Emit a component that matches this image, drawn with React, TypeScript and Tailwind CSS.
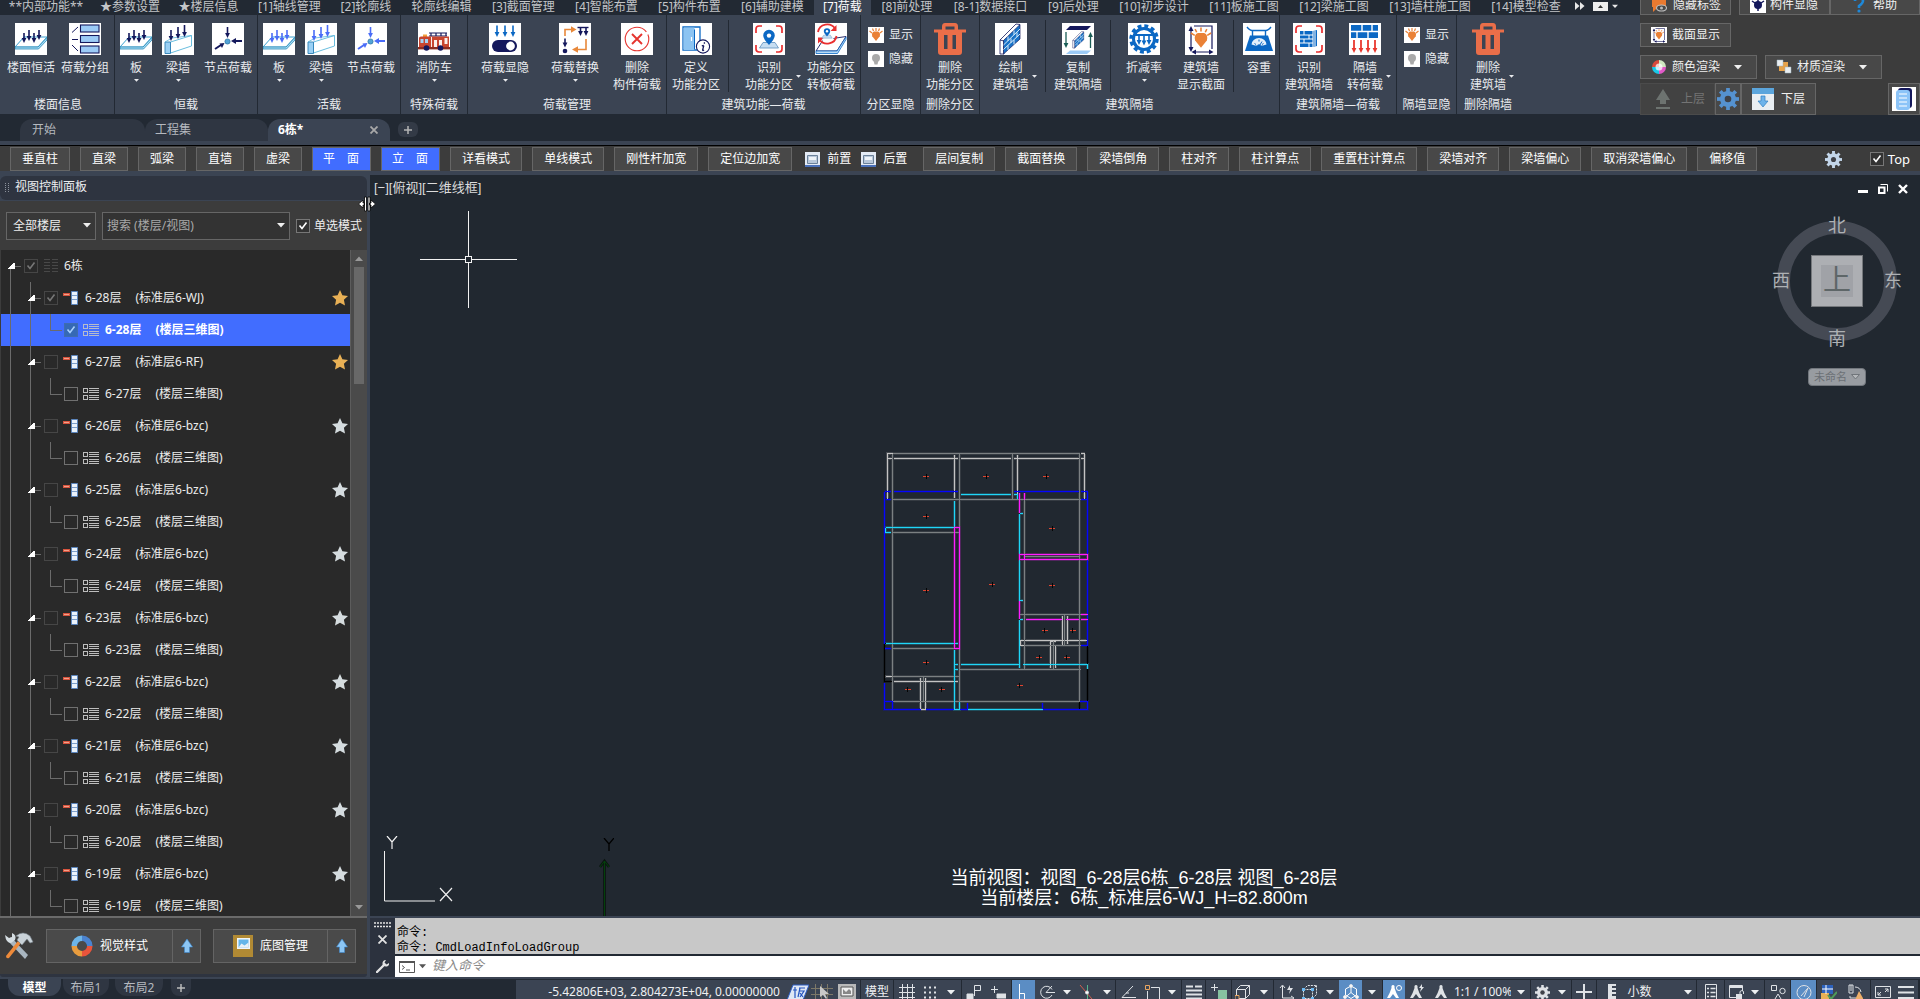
import React, { useState } from "react";

type P = { children?: React.ReactNode };

/* ---------- small shared pieces ---------- */

function Caret({ className = "" }: { className?: string }) {
  return (
    <svg viewBox="0 0 8 5" className={`h-[5px] w-2 shrink-0 ${className}`} fill="currentColor" aria-hidden="true">
      <path d="M0 0h8L4 4.6z" />
    </svg>
  );
}

function Tick({ checked, onChange, label, id, boxClass, tickClass }: {
  checked: boolean; onChange: () => void; label: string; id: string; boxClass: string; tickClass: string;
}) {
  return (
    <span className="grid size-[14px] shrink-0 place-items-center">
      <input
        id={id}
        type="checkbox"
        aria-label={label}
        checked={checked}
        onChange={onChange}
        className={`col-start-1 row-start-1 size-[14px] appearance-none border ${boxClass}`}
      />
      {checked && (
        <svg viewBox="0 0 14 14" className={`pointer-events-none col-start-1 row-start-1 size-[14px] ${tickClass}`} fill="none" stroke="currentColor" strokeWidth="1.6">
          <path d="M3.5 6.5 6 9.5 10.5 3.5" />
        </svg>
      )}
    </span>
  );
}

/* ---------- ribbon drawings ---------- */

function Tile({ children, small }: P & { small?: boolean }) {
  return (
    <svg viewBox="0 0 32 32" className={small ? "size-4 shrink-0" : "size-8 shrink-0"} aria-hidden="true">
      <rect width="32" height="32" fill="#fff" />
      {children}
    </svg>
  );
}

function Arrow({ x, y1, y2, c, w = 1.6 }: { x: number; y1: number; y2: number; c: string; w?: number }) {
  const up = y2 < y1;
  const d = up ? `M${x - 2.4} ${y2 + 5}h4.8L${x} ${y2}z` : `M${x - 2.4} ${y2 - 5}h4.8L${x} ${y2}z`;
  return (
    <g>
      <path d={`M${x} ${y1}V${up ? y2 + 4 : y2 - 4}`} stroke={c} strokeWidth={w} />
      <path d={d} fill={c} />
    </g>
  );
}

const navy = "#14185c";
const azure = "#4a6cf7";
const blue = "#0b68c4";
const sky = "#9ccbf7";

function SlabIcon({ c }: { c: string }) {
  return (
    <Tile>
      <path d="M0 24 9 14H32L23 24z" fill="#fff" stroke="#3aa0cf" strokeWidth="1" />
      <path d="M0 24H23L32 14.5V17L23.5 26H0z" fill="#a5dcf5" stroke="#2b8ab8" strokeWidth=".8" />
      <Arrow x={9} y1={10} y2={20} c={c} />
      <Arrow x={14} y1={7} y2={18} c={c} />
      <Arrow x={19} y1={10} y2={20} c={c} />
      <Arrow x={24} y1={7} y2={17} c={c} />
    </Tile>
  );
}

function WallIcon({ c }: { c: string }) {
  return (
    <Tile>
      <path d="M8.5 19 29.5 12.5V23L8.5 30z" fill="#fff" stroke="#58b5da" strokeWidth=".9" />
      <path d="M3 19H8.5V30.5H3z" fill="#9ad0f5" stroke="#2c7fb5" strokeWidth=".9" />
      <path d="M3 19 10 15 29.5 12.5" stroke="#58b5da" fill="none" strokeWidth=".8" />
      <Arrow x={9} y1={7} y2={18} c={c} />
      <Arrow x={16} y1={4} y2={16} c={c} />
      <Arrow x={22.5} y1={2} y2={14} c={c} />
    </Tile>
  );
}

function NodeIcon({ c }: { c: string }) {
  return (
    <Tile>
      <Arrow x={15.5} y1={4} y2={15} c={c} />
      <path d="M30 18H22" stroke={c} strokeWidth="2" />
      <path d="M19 18l5-3v6z" fill={c} />
      <path d="M3 26 9 22" stroke={c} strokeWidth="2" />
      <path d="M12.5 20 7.5 20.5 10 25z" fill={c} />
      <circle cx="15.5" cy="18.5" r="2.6" fill="#52a3d6" stroke="#2c6f9c" strokeWidth=".7" />
    </Tile>
  );
}

function GroupIcon() {
  return (
    <Tile>
      {[2, 12.5, 23].map((y) => (
        <rect key={y} x="11.5" y={y} width="18.5" height="7" fill={sky} stroke={navy} strokeWidth="1.1" />
      ))}
      <path d="M3 9.5 9 4M3 16.5H9M3 22 9 28" stroke={navy} strokeWidth="1" fill="none" />
    </Tile>
  );
}

function FireTruckIcon() {
  return (
    <Tile>
      <path d="M11 10h18M11 13h18M13 10v3M18 10v3M23 10v3M28 10v3" stroke={navy} strokeWidth="1.2" />
      <path d="M5 11.5h4V14H5z" fill="#f2a33a" />
      <path d="M1 15q0-1.5 2-1.5H31V26H1z" fill="#c8452f" />
      <path d="M2.5 16h3v4h-3zM7 16h3v4H7z" fill="#a7d3f4" />
      <path d="M13.5 14v12" stroke="#fff" strokeWidth=".9" />
      <path d="M16 17h3v7h-3zM21 17h3v7h-3zM26.5 15h3v6h-3z" fill="#fbeee9" />
      <path d="M0 24h32v2.4H0z" fill="#8d2c20" />
      <circle cx="8.5" cy="25" r="2.8" fill={navy} />
      <circle cx="22.5" cy="25" r="2.8" fill={navy} />
    </Tile>
  );
}

function ToggleIcon() {
  return (
    <Tile>
      <Arrow x={8} y1={2.5} y2={14} c={blue} />
      <Arrow x={16} y1={2.5} y2={14} c={blue} />
      <Arrow x={24} y1={2.5} y2={14} c={blue} />
      <rect x="3" y="17" width="25" height="12" rx="6" fill={navy} />
      <circle cx="21.5" cy="23" r="4.4" fill="#fff" />
    </Tile>
  );
}

function SwapIcon() {
  return (
    <Tile>
      <path d="M6 13V6.5H13" stroke="#e8883a" strokeWidth="1.6" fill="none" />
      <path d="M12 3.2 17.5 6.5 12 9.8z" fill="#e8883a" />
      <path d="M27 16V26.5H19" stroke="#e8883a" strokeWidth="1.6" fill="none" />
      <path d="M19 23.2 13 26.5 19 29.8z" fill="#e8883a" />
      <path d="M18.5 4.5H29.5" stroke={navy} strokeWidth="1.4" />
      <Arrow x={21.5} y1={4.5} y2={13} c={navy} />
      <Arrow x={27} y1={4.5} y2={13} c={navy} />
      <Arrow x={6} y1={15.5} y2={24.5} c={navy} />
      <circle cx="6" cy="28" r="2.3" fill={navy} />
    </Tile>
  );
}

function CrossIcon() {
  return (
    <Tile>
      <circle cx="16" cy="16" r="11.8" fill="none" stroke="#e5342f" strokeWidth="1.1" strokeDasharray="66 3" />
      <path d="M11 11 21 21M21 11 11 21" stroke="#e5342f" strokeWidth="1.9" />
    </Tile>
  );
}

function DoorIcon() {
  return (
    <Tile>
      <path d="M3 4H20V27H3z" fill="#fff" stroke={blue} strokeWidth="1.3" />
      <path d="M3.6 4.5H14.5V27H3.6z" fill="#8cc4f2" />
      <path d="M14.5 6.5v20" stroke={blue} strokeWidth="1" />
      <path d="M11.5 14v4" stroke="#fff" strokeWidth="1.2" />
      <circle cx="23" cy="23.5" r="6.6" fill="#fff" stroke={navy} strokeWidth="1.1" />
      <path d="M23.8 22.5 22.6 27q0 1 1.4 0M21.8 22.8l2-.5M24.4 19.3v1.4" stroke={navy} strokeWidth="1.3" fill="none" />
    </Tile>
  );
}

function Brackets() {
  return (
    <path d="M9 3H6Q3 3 3 6V10M23 3h3q3 0 3 3v4M9 29H6Q3 29 3 26V22M23 29h3q3 0 3-3V22" stroke="#ea2f2f" strokeWidth="1.7" fill="none" />
  );
}

function Pin({ k = 1, x = 16, y = 22 }: { k?: number; x?: number; y?: number }) {
  return (
    <g transform={`translate(${x} ${y}) scale(${k})`}>
      <path d="M-6-2.5-9.5 3H9.5L6-2.5z" fill="#c7def2" stroke="#5d8fbd" strokeWidth=".8" />
      <path d="M0 0Q-5.8-6-5.8-9.4A5.8 5.8 0 0 1 5.8-9.4Q5.8-6 0 0z" fill={blue} />
      <circle cx="0" cy="-9.4" r="2.2" fill="#fff" />
    </g>
  );
}

function IdentifyIcon() {
  return <Tile><Brackets /><Pin /></Tile>;
}

function ZoneToSlabIcon() {
  return (
    <Tile>
      <path d="M8 17 31 13.5 22 28H1z" fill="#fff" stroke={navy} strokeWidth=".9" />
      <path d="M1 28H22L31 14V16.5L22.5 30.5H1z" fill="#bcdcf5" stroke={blue} strokeWidth=".8" />
      <circle cx="12" cy="11" r="8" fill="#fff" />
      <path d="M3 9A9.3 9 0 0 1 20 5.5M21.5 13A9.3 9 0 0 1 4.5 16.5" stroke="#ea2f2f" strokeWidth="1.8" fill="none" />
      <path d="M21.5 2V8h-6zM3 20.5V14.5H9z" fill="#ea2f2f" />
      <Pin k={0.55} x={12} y={13.5} />
    </Tile>
  );
}

function BulbShape({ c }: { c: string }) {
  return <path d="M16 28 8.5 18.5Q6.500 11 12 9h8q5.500 2 3.500 9.500z" fill={c} />;
}

function ShowIcon() {
  return (
    <Tile small>
      <BulbShape c="#ea8136" />
      <path d="M16 2v6M9 3l2 5M23 3l-2 5M3 8l5 4M29 8l-5 4" stroke="#ea8136" strokeWidth="2.4" />
    </Tile>
  );
}

function HideIcon() {
  return (
    <Tile small>
      <circle cx="16" cy="14" r="8" fill="#a9a9a9" />
      <path d="M11 18h10l-2 9h-6z" fill="#a9a9a9" />
    </Tile>
  );
}

function TrashIcon() {
  return (
    <svg viewBox="0 0 32 32" className="size-8 shrink-0" aria-hidden="true">
      <path d="M0 6.500H8V3.500Q8 0 11 0H21Q24 0 24 3.500V6.500H32V9.500H28V29Q28 32 25 32H7Q4 32 4 29V9.500H0zM11.500 3.500V6.500H20.500V3.500z" fill="#ea6e49" />
      <path d="M10 12h3.500V26H10zM18.500 12H22V26H18.500z" fill="#3b4453" />
    </svg>
  );
}

function BrickWall({ k = 1, x = 0, y = 0 }: { k?: number; x?: number; y?: number }) {
  return (
    <g transform={`translate(${x} ${y}) scale(${k})`}>
      <path d="M5 17 9 18V31L5 31z" fill="#fff" stroke={navy} strokeWidth=".8" />
      <path d="M8.500 17.500 25 1.500V16L8.500 31z" fill="#1a73c7" stroke={navy} strokeWidth=".7" />
      <path d="M5 17 21 1 25 1.500" stroke={navy} strokeWidth=".8" fill="none" />
      <path d="M8.500 22 25 6M8.500 26.500 25 11M13 13.500v4.400M19 7.500v4.400M16 15.500v4.400M22 9.500v4.400M13 22.500v4.400M19 17v4.400" stroke="#d9ecfb" strokeWidth="1" />
    </g>
  );
}

function DrawWallIcon() {
  return <Tile><BrickWall /></Tile>;
}

function CopyWallIcon() {
  return (
    <Tile>
      <path d="M8 3H29L25 7H4z" fill={navy} />
      <path d="M8 27.500H29L25 31H4z" fill={sky} />
      <Arrow x={4} y1={9} y2={25} c="#1b5e57" w={1.3} />
      <Arrow x={28.500} y1={25} y2={9} c="#1b5e57" w={1.3} />
      <BrickWall k={0.55} x={8} y={8} />
    </Tile>
  );
}

function ReductionIcon() {
  return (
    <Tile>
      <circle cx="16" cy="16" r="13" fill="none" stroke={blue} strokeWidth="3.400" strokeDasharray="3.900 2.900" />
      <circle cx="16" cy="16" r="10.500" fill="#fff" stroke={blue} strokeWidth="3" />
      <path d="M6.500 11H25.500L25 13H7z" fill={blue} />
      <Arrow x={11} y1={11} y2={22} c={blue} />
      <Arrow x={16} y1={11} y2={22.500} c={blue} />
      <Arrow x={21} y1={11} y2={22} c={blue} />
    </Tile>
  );
}

function SectionIcon({ small }: { small?: boolean }) {
  return (
    <Tile small={small}>
      <path d="M9 3H27V26M6 5V26M9 29H26" stroke={navy} strokeWidth="1.200" fill="none" />
      <path d="M3.500 8 6 3l2.500 5zM3.500 24 6 29l2.500-5zM11 26.500 6.500 29 11 31.500zM24 26.500l4.500 2.500L24 31.500z" fill={navy} />
      <g transform="translate(3.500 3) scale(.78)">
        <BulbShape c="#ea8136" />
        <path d="M16 2v5M8.500 4l2 4M23.500 4l-2 4M3 9l5 3M29 9l-5 3" stroke="#ea8136" strokeWidth="2" />
      </g>
    </Tile>
  );
}

function ScaleIcon() {
  return (
    <Tile>
      <path d="M4 4q3 3.500 5 3.500H23q2 0 5-3.500M9.500 7.500V13M22.500 7.500V13" stroke={blue} strokeWidth="1.400" fill="none" />
      <path d="M7 12.500H25L30 28H2z" fill={blue} />
      <path d="M8.500 21.500A7.500 6.500 0 0 1 23.500 21.500L20 22.500H12z" fill="#e4f0fb" />
      <path d="M11.500 20.500l1.500 1M16 16.500v2M20.500 20.500l-1.500 1M16 23.500l3-5" stroke={blue} strokeWidth="1" />
      <circle cx="16" cy="23" r="1.800" fill={blue} />
    </Tile>
  );
}

function IdentifyWallIcon() {
  return (
    <Tile>
      <Brackets />
      <path d="M7 8H20L24 7V23L20 24H7z" fill={blue} />
      <path d="M7 12H20M7 16H20M7 20H20M11 8v4M16 12v4M11 16v4M16 20v4M20 8V24M22 7.500v16" stroke="#fff" strokeWidth="1" />
    </Tile>
  );
}

function WallLoadIcon() {
  return (
    <Tile>
      <path d="M2 2H29V15H2z" fill={blue} />
      <path d="M2 8.500H29M13 2V8.500M23 2V8.500M8 8.500V15M19 8.500V15" stroke="#fff" strokeWidth="1.400" />
      {[5, 12, 19, 26].map((x) => <Arrow key={x} x={x} y1={17} y2={30} c="#e9382f" w={1.800} />)}
    </Tile>
  );
}

/* ---------- menu tabs ---------- */

const menuTabs: [string, string][] = [
  ["**内部功能**", "w-[90px]"], ["★参数设置", "w-[78px]"], ["★楼层信息", "w-[79px]"], ["[1]轴线管理", "w-[83px]"],
  ["[2]轮廓线", "w-[70px]"], ["轮廓线编辑", "w-[81px]"], ["[3]截面管理", "w-[83px]"], ["[4]智能布置", "w-[83px]"],
  ["[5]构件布置", "w-[83px]"], ["[6]辅助建模", "w-[83px]"], ["[7]荷载", "w-[57px]"], ["[8]前处理", "w-[72px]"],
  ["[8-1]数据接口", "w-[95px]"], ["[9]后处理", "w-[71px]"], ["[10]初步设计", "w-[90px]"], ["[11]板施工图", "w-[90px]"],
  ["[12]梁施工图", "w-[90px]"], ["[13]墙柱施工图", "w-[102px]"], ["[14]模型检查", "w-[90px]"],
];

function MenuTabs() {
  return (
    <nav className="flex h-[15px] bg-[#222933] pl-[1px] leading-[13px] text-[#c3c5c8]">
      {menuTabs.map(([t, w]) => (
        <button
          key={t}
          className={`flex h-[15px] shrink-0 items-start justify-center whitespace-nowrap ${w} ${t === "[7]荷载" ? "bg-[#3b4453] text-white" : ""}`}
        >
          {t}
        </button>
      ))}
      <button aria-label="更多" className="flex h-3 items-center px-1 text-[#e8e8e8]">
        <svg viewBox="0 0 10 8" className="h-2 w-2.5" fill="currentColor"><path d="M0 0 4.500 4 0 8zM5 0 9.500 4 5 8z" /></svg>
      </button>
      <button aria-label="最小化功能区" className="flex h-3 items-center gap-1 pl-1 text-[#e8e8e8]">
        <svg viewBox="0 0 15 9" className="h-[9px] w-[15px]"><path fill="#eee" d="M0 0h15v9H0z" /><path fill="#333" d="M5 6h5L7.500 3z" /></svg>
        <Caret className="w-[6px]" />
      </button>
    </nav>
  );
}

/* ---------- ribbon ---------- */

function Big({ icon, a, b, caret, w }: { icon: React.ReactNode; a: string; b?: string; caret?: boolean; w: string }) {
  return (
    <button className={`flex shrink-0 flex-col items-center pt-2 ${w}`}>
      {icon}
      <span className="mt-1 leading-[17px] whitespace-nowrap">{a}</span>
      {b && (
        <span className="relative leading-[17px] whitespace-nowrap">
          {b}
          {caret && <Caret className="absolute -top-0.5 left-full ml-[3px] h-[3px] w-[5px]" />}
        </span>
      )}
      {caret && !b && <Caret className="mt-0.5 h-[3px] w-[5px]" />}
    </button>
  );
}

function Group({ title, w, children }: P & { title: string; w: string }) {
  return (
    <section className={`flex shrink-0 flex-col border-r border-[#222933] ${w}`}>
      <div className="flex flex-1 items-stretch">{children}</div>
      <h2 className="h-[18px] text-center leading-[18px] whitespace-nowrap">{title}</h2>
    </section>
  );
}

function Divider({ className = "mx-1" }: { className?: string }) {
  return <span className={`mt-[5px] mb-1 w-px shrink-0 bg-[#222933] ${className}`} />;
}

function ShowHide() {
  return (
    <div className="flex flex-col gap-2 pt-3 pl-[7px]">
      <button className="flex h-4 items-center gap-[5px] whitespace-nowrap"><ShowIcon />显示</button>
      <button className="flex h-4 items-center gap-[5px] whitespace-nowrap"><HideIcon />隐藏</button>
    </div>
  );
}

function Ribbon() {
  return (
    <div className="flex h-[99px] bg-[#3b4453] pl-0.5 text-[#e9ebee]">
      <Group title="楼面信息" w="w-[113px]">
        <Big w="w-[58px]" icon={<SlabIcon c={navy} />} a="楼面恒活" />
        <Big w="w-[50px]" icon={<GroupIcon />} a="荷载分组" />
      </Group>
      <Group title="恒载" w="w-[143px]">
        <Big w="w-[42px]" icon={<SlabIcon c={navy} />} a="板" caret />
        <Big w="w-[42px]" icon={<WallIcon c={navy} />} a="梁墙" caret />
        <Big w="w-[58px]" icon={<NodeIcon c={navy} />} a="节点荷载" />
      </Group>
      <Group title="活载" w="w-[143px]">
        <Big w="w-[42px]" icon={<SlabIcon c={azure} />} a="板" caret />
        <Big w="w-[42px]" icon={<WallIcon c={azure} />} a="梁墙" caret />
        <Big w="w-[58px]" icon={<NodeIcon c={azure} />} a="节点荷载" />
      </Group>
      <Group title="特殊荷载" w="w-[67px]">
        <Big w="w-[66px]" icon={<FireTruckIcon />} a="消防车" caret />
      </Group>
      <Group title="荷载管理" w="w-[199px]">
        <Big w="w-[74px]" icon={<ToggleIcon />} a="荷载显隐" caret />
        <Big w="w-[66px]" icon={<SwapIcon />} a="荷载替换" caret />
        <Big w="w-[58px]" icon={<CrossIcon />} a="删除" b="构件荷载" />
      </Group>
      <Group title="建筑功能—荷载" w="w-[194px]">
        <Big w="w-[58px]" icon={<DoorIcon />} a="定义" b="功能分区" />
        <Divider className="mr-1.5 ml-[3px]" />
        <Big w="w-[68px]" icon={<IdentifyIcon />} a="识别" b="功能分区" caret />
        <Big w="w-[56px]" icon={<ZoneToSlabIcon />} a="功能分区" b="转板荷载" />
      </Group>
      <Group title="分区显隐" w="w-[60px]"><ShowHide /></Group>
      <Group title="删除分区" w="w-[59px]">
        <Big w="w-[58px]" icon={<TrashIcon />} a="删除" b="功能分区" />
      </Group>
      <Group title="建筑隔墙" w="w-[300px]">
        <Big w="w-[61px]" icon={<DrawWallIcon />} a="绘制" b="建筑墙" caret />
        <Divider />
        <Big w="w-[56px]" icon={<CopyWallIcon />} a="复制" b="建筑隔墙" />
        <Divider />
        <Big w="w-[58px]" icon={<ReductionIcon />} a="折减率" caret />
        <Big w="w-[56px]" icon={<SectionIcon />} a="建筑墙" b="显示截面" />
        <Divider />
        <Big w="w-[42px]" icon={<ScaleIcon />} a="容重" />
      </Group>
      <Group title="建筑隔墙—荷载" w="w-[117px]">
        <Big w="w-[58px]" icon={<IdentifyWallIcon />} a="识别" b="建筑隔墙" />
        <Big w="w-[54px]" icon={<WallLoadIcon />} a="隔墙" b="转荷载" caret />
      </Group>
      <Group title="隔墙显隐" w="w-[60px]"><ShowHide /></Group>
      <section className="flex w-[62px] shrink-0 flex-col">
        <div className="flex flex-1 items-stretch">
          <Big w="w-[62px]" icon={<TrashIcon />} a="删除" b="建筑墙" caret />
        </div>
        <h2 className="h-[18px] text-center leading-[18px] whitespace-nowrap">删除隔墙</h2>
      </section>
    </div>
  );
}

/* ---------- display tools at the right of the ribbon ---------- */

const tool = "flex items-center border border-[#666] bg-[#484848] whitespace-nowrap text-[#f0f0f0]";

function DisplayTools() {
  return (
    <aside className="flex h-[115px] w-[280px] shrink-0 flex-col gap-2 overflow-hidden bg-[#3c3c3c]">
      <div className="flex h-[15px] items-end overflow-hidden">
        <button className={`${tool} h-[21px] w-[91px] shrink-0 gap-1.5 pl-2.5`}>
          <svg viewBox="0 0 16 16" className="size-4"><path d="M1 0h14v10h-8l-5 5v-5H1z" fill="#ea7a30" /><ellipse cx="10.500" cy="11" rx="5" ry="3" fill="#484848" stroke="#bbb" strokeWidth="1.200" /><circle cx="10.500" cy="11" r="1.500" fill="#bbb" /></svg>
          隐藏标签
        </button>
        <button className={`${tool} ml-2 h-[21px] w-[91px] shrink-0 gap-1 pl-2.5`}>
          <svg viewBox="0 0 16 16" className="size-4"><path d="M0 0h16v16H0z" fill="#fff" /><circle cx="8" cy="8" r="4" fill={navy} /><path d="M8 0v14M2 4l3 2M14 4l-3 2" stroke={navy} strokeWidth="1.500" /></svg>
          构件显隐
        </button>
        <button className={`${tool} h-[21px] flex-1 gap-1.5 pl-5`}>
          <svg viewBox="0 0 16 16" className="size-4" fill="none"><path d="M4 4Q4 1 8 1q4 0 4 3 0 2-4 5v2" stroke="#1e88d8" strokeWidth="2.600" /><circle cx="8" cy="14" r="1.600" fill="#1e88d8" /></svg>
          帮助
        </button>
      </div>
      <button className={`${tool} h-6 w-[91px] gap-[5px] pl-2.5`}><SectionIcon small />截面显示</button>
      <div className="flex gap-2">
        <button className={`${tool} h-6 w-[117px] pl-2.5`}>
          <svg viewBox="0 0 16 16" className="mr-[5px] size-4">
            <path d="M8 8 8 1A7 7 0 0 1 15 8z" fill="#cfe8c0" /><path d="M8 8H15A7 7 0 0 1 8 15z" fill="#e15ac8" /><path d="M8 8V15A7 7 0 0 1 1 8z" fill="#19c8e8" /><path d="M8 8H1A7 7 0 0 1 8 1z" fill="#d8493c" />
            <circle cx="8" cy="8" r="3.500" fill="#fff" opacity=".75" />
          </svg>
          颜色渲染<Caret className="ml-[14px]" />
        </button>
        <button className={`${tool} h-6 w-[117px] pl-2.5`}>
          <svg viewBox="0 0 16 16" className="mr-[5px] size-4"><path d="M3 3h9v9H3z" fill="#e6a24a" /><path d="M1 1h6v6H1zM9 8h6v6H9z" fill="#e9eef2" stroke="#9fb0bd" strokeWidth=".5" /></svg>
          材质渲染<Caret className="ml-[14px]" />
        </button>
      </div>
      <div className="-mt-1 flex h-8">
        <button disabled className="flex w-[75px] items-center gap-2 border border-[#4b4b4b] bg-[#424242] pl-3 whitespace-nowrap text-[#747474]">
          <svg viewBox="0 0 20 22" className="h-[22px] w-5" fill="#6d7370"><path d="M10 1 17 12H13v4H7V12H3zM3 19h14v2H3z" /></svg>
          上层
        </button>
        <button aria-label="楼层设置" className={`${tool} w-[26px] justify-center`}>
          <GearShape className="size-[22px] text-[#5592d0]" />
        </button>
        <button className={`${tool} w-[75px] gap-[7px] pl-2.5`}>
          <svg viewBox="0 0 22 22" className="size-[22px]"><path d="M0 0h22v22H0z" fill="#e9eef2" /><path d="M0 0h22v6H0z" fill="#5ba5dc" /><path d="M9 8h4v5h3l-5 6-5-6h3z" fill="#6db3ea" stroke="#2e7fc0" strokeWidth=".7" /></svg>
          下层
        </button>
        <button aria-label="图纸列表" className={`${tool} ml-auto w-8 justify-center`}>
          <svg viewBox="0 0 24 24" className="size-6"><path d="M0 0h24v24H0z" fill="#fff" /><rect x="6" y="1" width="14" height="20" rx="3" fill={navy} /><rect x="4" y="3" width="14" height="20" rx="3" fill="#8cc4f8" /><path d="M7 7h8M7 11h8M7 15h8M7 19h8" stroke="#fff" strokeWidth="1.200" /></svg>
        </button>
      </div>
    </aside>
  );
}

function GearShape({ className = "" }: { className?: string }) {
  return (
    <svg viewBox="0 0 20 20" className={`shrink-0 ${className}`} aria-hidden="true">
      <g fill="currentColor">
        {[0, 45, 90, 135].map((a) => <path key={a} d="M8.300 0h3.400v20H8.300z" transform={`rotate(${a} 10 10)`} />)}
        <circle cx="10" cy="10" r="7.300" />
      </g>
      <circle cx="10" cy="10" r="3" fill="#3f4249" />
    </svg>
  );
}

/* ---------- file tabs ---------- */

function FileTabs() {
  return (
    <div className="flex h-[26px] shrink-0 items-end bg-[#222933] pl-5 text-[#b5b9bf]">
      <button className="h-[22px] w-[125px] rounded-t-xl bg-[#2f3642] pl-3 text-left">开始</button>
      <button className="h-[22px] w-[123px] rounded-t-xl bg-[#2f3642] pl-[10px] text-left">工程集</button>
      <div className="flex h-[22px] w-[122px] items-center justify-between rounded-t-xl bg-[#3b4453] pr-3 pl-[10px] text-white">
        <button className="font-bold">6栋*</button>
        <button aria-label="关闭" className="text-[#a9a9a9]">
          <svg viewBox="0 0 8 8" className="size-2" stroke="currentColor" strokeWidth="1.800"><path d="M.5.5l7 7M7.500.5l-7 7" /></svg>
        </button>
      </div>
      <button aria-label="新建" className="mb-1 ml-2 flex h-[15px] w-5 items-center justify-center rounded-md bg-[#333a46] text-[#b5b5b5]">
        <svg viewBox="0 0 8 8" className="size-2" stroke="currentColor" strokeWidth="1.500"><path d="M4 0v8M0 4h8" /></svg>
      </button>
    </div>
  );
}

/* ---------- modelling toolbar ---------- */

const left = ["垂直柱", "直梁", "弧梁", "直墙", "虚梁", "平　面", "立　面", "详看模式", "单线模式", "刚性杆加宽", "定位边加宽"];
const right = ["层间复制", "截面替换", "梁墙倒角", "柱对齐", "柱计算点", "重置柱计算点", "梁墙对齐", "梁墙偏心", "取消梁墙偏心", "偏移值"];

function BarButton({ t }: { t: string }) {
  const on = t.includes("　");
  return (
    <button className={`h-6 shrink-0 border border-[#666] whitespace-nowrap text-white ${on ? "bg-[#416dff] pr-[11px] pl-2.5" : "bg-[#484848] px-[11px]"}`}>{t}</button>
  );
}

function OrderIcon() {
  return (
    <svg viewBox="0 0 15 15" className="size-[15px]" aria-hidden="true">
      <path d="M0 0h15v15H0z" fill="#e4ebf5" /><path d="M0 13h15v2H0z" fill="#4a70b8" />
      <path d="M2.500 3.500h10v8h-10z" fill="#b9c8da" stroke="#6b8199" /><path d="M4 5h7v3H4z" fill="#eef3f8" />
    </svg>
  );
}

function Toolbar() {
  const [top, setTop] = useState(true);
  return (
    <div className="shrink-0 border-t-4 border-b-4 border-[#3b4453]">
      <div className="flex h-[26px] items-end gap-2.5 border-t border-black bg-[#3c3c3c] pl-2.5">
        {left.map((t) => <BarButton key={t} t={t} />)}
        <div className="flex h-6 shrink-0 items-center gap-2.5 px-[3px] text-white">
          <button className="flex items-center gap-[7px] whitespace-nowrap"><OrderIcon />前置</button>
          <button className="mr-[3px] flex items-center gap-[7px] whitespace-nowrap"><OrderIcon />后置</button>
        </div>
        {right.map((t) => <BarButton key={t} t={t} />)}
        <div className="ml-auto flex h-6 items-center gap-7 pr-2.5">
          <button aria-label="设置"><GearShape className="size-[17px] text-[#c3d6ea]" /></button>
          <label htmlFor="top" className="flex items-center gap-1 text-[13px] text-white">
            <Tick id="top" label="Top" checked={top} onChange={() => setTop(!top)} boxClass="border-[#777] bg-[#333]" tickClass="text-white" />
            Top
          </label>
        </div>
      </div>
    </div>
  );
}

/* ---------- view tree ---------- */

function Gutter({ level }: { level: 0 | 1 | 2 }) {
  return (
    <svg viewBox={`0 0 ${[23, 43, 63][level]} 32`} className={`h-8 shrink-0 ${["w-[23px]", "w-[43px]", "w-[63px]"][level]}`} fill="none" stroke="#6b6b6b" shapeRendering="crispEdges" aria-hidden="true">
      {level === 0 && <><path d="M9.500 17v15M13 16.500h7" /><path d="M7 18.500h6.500v-6z" fill="#fff" stroke="none" /></>}
      {level === 1 && <><path d="M9.500 0v32M29.500 0v32M33 16.500h7" /><path d="M27 18.500h6.500v-6z" fill="#fff" stroke="none" /></>}
      {level === 2 && <path d="M9.500 0v32M29.500 0v32M49.500 0v16.500h11" />}
    </svg>
  );
}

const floors = [
  { n: "6-28层", s: "(标准层6-WJ)", gold: true },
  { n: "6-27层", s: "(标准层6-RF)", gold: true },
  ...[26, 25, 24, 23, 22, 21, 20, 19].map((k) => ({ n: `6-${k}层`, s: "(标准层6-bzc)", gold: false })),
];

function FloorIcon() {
  return (
    <svg viewBox="0 0 16 14" className="h-[14px] w-4 shrink-0" aria-hidden="true">
      <path d="M0 2h7v3H0z" fill="#d8543e" /><path d="M1 3h5v1H1z" fill="#f0a08a" />
      <path d="M8.500.500h6v13h-6z" fill="#eaf2fb" stroke="#5b85bd" /><path d="M9 4.500h5M9 8.500h5" stroke="#7e9fc8" />
    </svg>
  );
}

function ViewIcon({ on }: { on: boolean }) {
  return (
    <svg viewBox="0 0 16 12" className="h-3 w-4 shrink-0" fill="none" stroke={on ? "#b5bccb" : "#bdbdbd"} shapeRendering="crispEdges" aria-hidden="true">
      <path d="M.5.5h4v4h-4zM.5 7.500h4v4h-4zM6 .5h10M6 2.500h10M6 4.500h10M6 7.500h10M6 9.500h10M6 11.500h10" />
    </svg>
  );
}

function Tree() {
  const [on, setOn] = useState<string[]>(["root", "f6-28层", "v6-28层"]);
  const flip = (k: string) => setOn((o) => (o.includes(k) ? o.filter((x) => x !== k) : [...o, k]));
  const dim = "border-[#464646] bg-[#292929]";
  return (
    <div className="flex min-h-0 flex-1 pl-px">
      <ul className="min-w-0 flex-1 overflow-hidden bg-[#292929] text-[#ececec]">
        <li className="flex h-8 items-center">
          <Gutter level={0} />
          <Tick id="root" label="6栋" checked={on.includes("root")} onChange={() => flip("root")} boxClass={dim} tickClass="text-[#777]" />
          <svg viewBox="0 0 14 14" className="mx-1.5 size-[14px]" stroke="#484848" shapeRendering="crispEdges"><path d="M0 .5h6M0 3.500h6M0 6.500h6M0 9.500h6M0 12.500h6M8 .5h6M8 3.500h6M8 6.500h6M8 9.500h6M8 12.500h6" /></svg>
          <label htmlFor="root">6栋</label>
        </li>
        {floors.map((f) => {
          const first = f.n === "6-28层";
          return (
            <React.Fragment key={f.n}>
              <li className="flex h-8 items-center">
                <Gutter level={1} />
                <Tick id={`f${f.n}`} label={f.n} checked={on.includes(`f${f.n}`)} onChange={() => flip(`f${f.n}`)} boxClass={dim} tickClass="text-[#777]" />
                <span className="mr-1.5 ml-[5px]"><FloorIcon /></span>
                <label htmlFor={`f${f.n}`} className="flex gap-[14px] whitespace-nowrap"><span>{f.n}</span><span>{f.s}</span></label>
                <button aria-label={`收藏 ${f.n}`} className={`mr-0.5 ml-auto ${f.gold ? "text-[#e8b055]" : "text-[#d5dcdf]"}`}>
                  <svg viewBox="0 0 16 16" className="size-4" fill="currentColor"><path d="M8 0 10.400 5.200 16 5.900 11.900 9.700 13 15.500 8 12.700 3 15.500 4.100 9.700 0 5.900 5.600 5.200z" /></svg>
                </button>
              </li>
              <li className={`flex h-8 items-center ${first ? "bg-[#416dff] font-bold text-white" : ""}`}>
                <Gutter level={2} />
                <Tick id={`v${f.n}`} label={`${f.n} 楼层三维图`} checked={on.includes(`v${f.n}`)} onChange={() => flip(`v${f.n}`)} boxClass={first ? "border-[#3f6cb0] bg-[#3569b5]" : "border-[#707070] bg-[#292929]"} tickClass="text-[#a8d0ff]" />
                <span className="mr-1.5 ml-[5px]"><ViewIcon on={first} /></span>
                <label htmlFor={`v${f.n}`} className="flex gap-[14px] whitespace-nowrap"><span>{f.n}</span><span>(楼层三维图)</span></label>
              </li>
            </React.Fragment>
          );
        })}
      </ul>
      <div className="flex w-[17px] flex-col items-center border-l border-[#5c5c5c] bg-[#4a4a4a] py-1.5 text-[#999]">
        <Caret className="rotate-180" />
        <div className="mt-1.5 h-[117px] w-2.5 bg-[#686868]" />
        <Caret className="mt-auto" />
      </div>
    </div>
  );
}

function UpArrow() {
  return (
    <svg viewBox="0 0 12 14" className="h-[14px] w-3" aria-hidden="true"><path d="M6 0 11.500 8H8.500v5.500h-5V8H.5z" fill="#8cc6f5" stroke="#3e8ad0" strokeWidth=".6" /></svg>
  );
}

function SplitButton({ icon, t, w }: { icon: React.ReactNode; t: string; w: string }) {
  return (
    <div className={`flex h-[34px] border border-[#646464] bg-[#4a4a4a] ${w}`}>
      <button className="flex flex-1 items-center justify-center gap-[7px] whitespace-nowrap text-white">{icon}{t}</button>
      <button aria-label={`${t}菜单`} className="flex w-7 items-center justify-center border-l border-[#646464]"><UpArrow /></button>
    </div>
  );
}

function SidePanel() {
  const [single, setSingle] = useState(true);
  return (
    <section className="flex w-[370px] shrink-0 flex-col bg-[#3b4453] pr-[3px]">
      <h1 className="mt-px mb-px flex h-6 items-center gap-[6px] rounded-md bg-[#2e3440] pb-0.5 pl-[5px] text-[#eceef0]">
        <svg viewBox="0 0 4 9" className="h-[9px] w-1" fill="#8c929c"><path d="M0 0h1v1H0zM3 0h1v1H3zM0 2h1v1H0zM3 2h1v1H3zM0 4h1v1H0zM3 4h1v1H3zM0 6h1v1H0zM3 6h1v1H3zM0 8h1v1H0zM3 8h1v1H3z" /></svg>
        视图控制面板
      </h1>
      <div className="flex min-h-0 flex-1 flex-col bg-[#3c3c3c]">
        <div className="flex h-[49px] items-center gap-1.5 pl-1.5 text-[#eee]">
          <div className="grid w-[90px] items-center">
            <select aria-label="楼层范围" className="col-start-1 row-start-1 h-7 appearance-none border border-[#666] bg-[#383838] pl-1.5">
              <option>全部楼层</option>
            </select>
            <Caret className="pointer-events-none col-start-1 row-start-1 mr-[5px] justify-self-end" />
          </div>
          <div className="grid w-[188px] items-center">
            <input aria-label="搜索" placeholder="搜索 (楼层/视图)" className="col-start-1 row-start-1 h-7 w-full border border-[#666] bg-[#333] pl-1 placeholder:text-[#a8a8a8]" />
            <Caret className="pointer-events-none col-start-1 row-start-1 mr-[5px] justify-self-end" />
          </div>
          <label htmlFor="single" className="flex items-center gap-1 whitespace-nowrap">
            <Tick id="single" label="单选模式" checked={single} onChange={() => setSingle(!single)} boxClass="border-[#777] bg-[#333]" tickClass="text-white" />
            单选模式
          </label>
        </div>
        <Tree />
        <div className="flex h-[58px] shrink-0 items-center gap-3 border-t-2 border-[#6a6a6a] pl-1">
          <button aria-label="工具">
            <svg viewBox="0 0 30 28" className="h-7 w-[30px]">
              <path d="M7 5 24 23l-3 4L4 9z" fill="#a9b6c0" /><path d="M1 3l4 3 3-1V1Q13 3 11 8L7 11Q2 11 1 3z" fill="#d5dde2" />
              <path d="M17 11 5 26q-3 1-3-2L14 9z" fill="#ed8a3a" /><path d="M12 4Q19-2 26 4l3 6-3 1-3-4-5 6-5-5 2-3z" fill="#c9d2d8" stroke="#77838c" strokeWidth=".6" />
            </svg>
          </button>
          <SplitButton w="w-[155px]" t="视觉样式" icon={
            <svg viewBox="0 0 24 24" className="size-[22px]" fill="none" strokeWidth="6">
              <path d="M12 3.500A8.500 8.500 0 0 1 20.500 12" stroke="#4b83cf" /><path d="M20.500 12A8.500 8.500 0 0 1 12 20.500" stroke="#e9543b" /><path d="M12 20.500A8.500 8.500 0 0 1 3.500 12" stroke="#e89c3e" /><path d="M3.500 12A8.500 8.500 0 0 1 12 3.500" stroke="#6db5e8" />
            </svg>} />
          <SplitButton w="w-[143px]" t="底图管理" icon={
            <svg viewBox="0 0 20 22" className="h-[22px] w-5"><path d="M0 0h20v22H0z" fill="#b18a34" /><path d="M4 3h13v11H4z" fill="#f3f6f8" /><path d="M5.500 4.500h10v8h-10z" fill="#64b5e8" /><path d="M5.500 12.500l3-4 3 2 4-3v5z" fill="#e8f0f5" /></svg>} />
        </div>
      </div>
      <div className="mb-[2px] h-[3px] rounded-b-md bg-[#2e3440]" />
    </section>
  );
}

/* ---------- drawing area ---------- */

const marks: [number, number][] = [
  [198, 136], [378, 136], [558, 136], [198, 256], [576, 292], [198, 478], [396, 460], [576, 463], [553, 597], [637, 597],
  [537, 679], [619, 679], [198, 694], [142, 775], [244, 775], [478, 763],
];

const walls: [string, string][] = [
  ["#000000", "M96 637H73V751H96M683 645V811M658 811V832"],
  ["#c4c4c4", "M82 205V67H97M82 82H97M102 82H294M303 82H453M462 82H655M662 82H674V205M662 67H674M284 72V199M473 72V199M673 67V82"],
  ["#c4c4c4", "M96 736H76M102 751H294M182 741V835H197V741M607 555V640M622 555V638M480 628H681M480 628V643H495M572 628V710M587 645V710M572 631H587"],
  ["#7b8082", "M97 67H658M97 67V811H658V67M298 67V811M458 67V205M97 205H683M97 304H298M97 652H298M97 736H298M190 736V811M298 715H662M494 205V715M494 377H658M479 550H662M613 550V640M494 643H662M580 628V715"],
  ["#0505ff", "M102 181H294M462 181H655M73 181H92M662 181H683M73 181V637M683 181V643H662M73 652H92M76 205H92M662 205H683M73 755V835H97V811H73M97 835H182M197 835H322V815M547 815V835H683V811H658M683 811V835"],
  ["#1fd6f8", "M284 210V289M303 190H453M462 190H473V203M76 289H282M76 304H92M76 289V304M479 247V508M479 247H489M479 508H489M76 637H294M479 565H489M479 565V710M303 700H479M489 700H683V713M284 657V835H299V811M284 715H294M284 700H294M322 835H547"],
  ["#ff1cff", "M284 289H299V652H284zM479 184V245M494 184V205M479 370H683V385H479zM494 370V385M479 510V562M498 565H604M618 565H655M662 550H683M662 565H683"],
];

function FloorPlan() {
  return (
    <svg viewBox="0 0 750 900" className="absolute top-64 left-[490px] h-[300px] w-[250px]" fill="none" shapeRendering="crispEdges" aria-label="标准层平面">
      <g transform="translate(.5 .5)">
        <g strokeWidth="9" opacity=".22">
          {walls.map(([c, d]) => <path key={d} stroke={c} d={d} />)}
        </g>
        <g strokeWidth="3">
          {walls.map(([c, d]) => <path key={d} stroke={c} d={d} />)}
          {marks.map(([x, y]) => (
            <g key={`${x}-${y}`}>
              <path stroke="#050505" d={`M${x} ${y - 8}V${y + 8}`} />
              <path stroke="#e0442f" d={`M${x - 9} ${y}H${x - 2}M${x + 2} ${y}H${x + 9}`} />
            </g>
          ))}
        </g>
      </g>
    </svg>
  );
}

function ViewCube() {
  return (
    <div className="absolute top-[44px] right-[18px] grid h-[124px] w-[130px] place-items-center text-[18px] text-[#aeb1b4]">
      <svg viewBox="5 0 130 124" className="col-start-1 row-start-1 h-[124px] w-[130px]"><circle cx="70" cy="62" r="53.500" fill="none" stroke="#454a54" strokeWidth="13" /></svg>
      <button className="z-10 col-start-1 row-start-1 -mt-[3px] self-start leading-5">北</button>
      <button className="z-10 col-start-1 row-start-1 -mb-1.5 self-end leading-5">南</button>
      <button className="z-10 col-start-1 row-start-1 justify-self-start leading-5">西</button>
      <button className="z-10 col-start-1 row-start-1 justify-self-end leading-5">东</button>
      <button className="z-10 col-start-1 row-start-1 flex size-[52px] items-center justify-center border border-[#75787c] bg-[#adafb3]">
        <span className="flex size-8 items-center justify-center bg-[#a0a2a7] text-[28px] leading-8 text-[#5e6668]">上</span>
      </button>
    </div>
  );
}

function Canvas() {
  return (
    <main className="relative min-h-0 flex-1 overflow-hidden bg-[#212830] font-['Liberation_Sans','Noto_Sans_CJK_SC',sans-serif]">
      <div className="flex h-[26px] items-center justify-between pr-3 pl-1 text-[13px] text-[#dcdcdc]">
        <div className="flex whitespace-nowrap"><button>[−]</button><button>[俯视]</button><button>[二维线框]</button></div>
        <div className="flex items-center gap-2.5 pt-0.5 text-white">
          <button aria-label="最小化"><svg viewBox="0 0 10 10" className="size-2.5"><path d="M0 6h10v3H0z" fill="currentColor" /></svg></button>
          <button aria-label="还原"><svg viewBox="0 0 10 10" className="size-2.5" fill="none" stroke="currentColor"><path d="M1 3.500h5.500V9H1z" strokeWidth="2" /><path d="M2.500 .5h7v7" /></svg></button>
          <button aria-label="关闭视口"><svg viewBox="0 0 10 10" className="size-2.5" stroke="currentColor" strokeWidth="2.400"><path d="M1 1l8 8M9 1l-8 8" /></svg></button>
        </div>
      </div>
      <svg viewBox="0 0 97 97" className="absolute top-9 left-[50px] size-[97px]" fill="none" stroke="#f2f2f2" shapeRendering="crispEdges">
        <path d="M48.500 0v45M48.500 52v45M0 48.500h45M52 48.500h45M45.500 45.500h6v6h-6z" />
      </svg>
      <FloorPlan />
      <ViewCube />
      <button className="absolute top-[193px] right-[54px] flex h-[18px] w-[58px] items-center justify-center gap-1 rounded border border-[#72777d] bg-[#989ca1] text-[11px] whitespace-nowrap text-[#6b7075]">
        未命名
        <svg viewBox="0 0 9 6" className="h-1.5 w-[9px]" fill="#b5b8bb" stroke="#70757a"><path d="M.5.500h8L4.500 5z" /></svg>
      </button>
      <svg viewBox="0 0 80 80" className="absolute bottom-0 left-3 size-20" fill="none" stroke="#f0f0f0">
        <path d="M2.500 15v50H53" />
        <path d="M5 0l5 6 5-6M10 6v7M58 52l12 13M70 52 58 65" strokeWidth="1.200" />
      </svg>
      <svg viewBox="0 0 16 78" className="absolute bottom-0 left-[228px] h-[78px] w-4" fill="none" stroke="#000">
        <path d="M6 0l5 6 5-6M11 6v7" strokeWidth="1.300" />
        <path d="M6.500 23v55M2 29l4.500-6 4.500 6" stroke="#0a1410" strokeWidth="2.600" />
        <path d="M6.500 23v55M2 29l4.500-6 4.500 6" stroke="#04400c" />
      </svg>
      <p className="absolute inset-x-0 bottom-2 pr-0.5 text-center text-[18px] leading-5 whitespace-nowrap text-white">
        当前视图：视图_6-28层6栋_6-28层 视图_6-28层<br />当前楼层：6栋_标准层6-WJ_H=82.800m
      </p>
    </main>
  );
}

function CommandLine() {
  return (
    <section className="flex h-[63px] shrink-0 border-t-2 border-b-2 border-[#3b4453] bg-[#2c323e] font-['Liberation_Mono','Noto_Sans_CJK_SC',monospace]">
      <div className="flex w-[25px] flex-col items-center justify-between py-1 text-[#e2e2e2]">
        <svg viewBox="0 0 17 6" className="h-1.5 w-[17px]" stroke="currentColor" strokeDasharray="2 1" strokeWidth="1.500"><path d="M0 1h17M0 4.500h17" /></svg>
        <svg viewBox="0 0 9 9" className="size-[9px]" stroke="currentColor" strokeWidth="1.800"><path d="M.5.500l8 8M8.500.500l-8 8" /></svg>
        <svg viewBox="0 0 14 14" className="mt-2 size-[14px]"><path d="M1 13 8 6" stroke="currentColor" strokeWidth="2.400" strokeLinecap="round" /><path d="M13 4 10.500 5.500 8.500 3.500 10 1Q6 1 6.500 5.500 8.500 8.500 12 7 13.500 6 13 4z" fill="currentColor" /></svg>
      </div>
      <div className="flex min-w-0 flex-1 flex-col bg-white text-black">
        <div className="h-[38px] border-b-2 border-[#222933] bg-[#c8c8c8] pt-2 pl-0.5 text-[12px] leading-[15px]">
          <p>命令:</p>
          <p>命令: CmdLoadInfoLoadGroup</p>
        </div>
        <div className="flex flex-1 items-center gap-1 pl-1 text-[#555]">
          <svg viewBox="0 0 16 12" className="h-3 w-4" fill="none" stroke="#555"><path d="M.5.500h15v11H.5z" /><path d="M0 1h16" strokeWidth="2" /><path d="M3 4.500l2.500 2L3 8.500M7 9h4" /></svg>
          <Caret className="h-1 w-[7px]" />
          <input aria-label="命令" placeholder="键入命令" className="ml-0.5 min-w-0 flex-1 text-[13px] italic outline-none placeholder:text-[#8a8a8a]" />
        </div>
      </div>
    </section>
  );
}

/* ---------- bottom bar ---------- */

type Cell = { w: string; d?: React.ReactNode; t?: string; on?: boolean; caret?: boolean; name?: string; gap?: boolean };

function S({ children }: P) {
  return <svg viewBox="0 0 16 16" className="size-4 shrink-0" fill="none" stroke="#dfe2e6" aria-hidden="true">{children}</svg>;
}

const cube = <path d="M1.500 5.500h9v9h-9zM1.500 5.500l4-4h9l-4 4M14.500 1.500v9l-4 4" />;
const person = (c: string) => <path d="M7 1Q9 1 8.500 4 10 9 13 14H10L7 10 4 14H1Q4 9 5.500 4 5 1 7 1z" fill={c} stroke="none" />;

const cells: Cell[] = [
  { w: "w-[24px]", name: "板", d: <svg viewBox="0 0 22 16" className="h-4 w-[22px] shrink-0"><path d="M6 1h16l-6 15H0z" fill="#dfe7f5" stroke="#2f5fc4" /><path d="M8 3v11M6 6h4M12 4h6M13 4l-2 9M12 7h5l-4 6M13 9l3 4" stroke="#2454c0" strokeWidth="1.200" fill="none" /></svg> },
  { w: "w-[24px]", name: "捕捉光标", d: <svg viewBox="0 0 22 16" className="h-4 w-[22px] shrink-0"><path d="M4.500 0v16M10.500 0v16M16.500 0v16M0 4.500h22M0 10.500h22" stroke="#7d7868" /><path d="M9 2v11l3-2 3 4 1-1-2-4h4z" fill="#c9c9c9" /></svg> },
  { w: "w-[26px]", name: "显示器", d: <svg viewBox="0 0 18 16" className="h-4 w-[18px] shrink-0"><path d="M0 0h18v16H0z" fill="#b9b9b9" /><path d="M3 3h12v9H3z" fill="#eee" stroke="#555" /><path d="M5 5l3 3 3-3 2 2v3H5z" fill="#888" /></svg> },
  { w: "w-[33px]", t: "模型", gap: true },
  { w: "w-[26px]", name: "栅格", gap: true, d: <S><path d="M3.500 0v16M8.500 0v16M13.500 0v16M0 3.500h16M0 8.500h16M0 13.500h16" /></S> },
  { w: "w-[22px]", name: "捕捉模式", d: <S><path d="M2 3.500h13M2 8.500h13M2 13.500h13" strokeDasharray="2 3" strokeWidth="2" /></S> },
  { w: "w-[20px]", caret: true, name: "捕捉选项" },
  { w: "w-[24px]", name: "推断约束", gap: true, d: <S><path d="M8.500 1.500h6v5h-6zM8.500 4v8" /><path d="M1 10h6v5H1z" fill="#dfe2e6" /></S> },
  { w: "w-[26px]", name: "动态输入", d: <S><path d="M4.500 2v7M1 5.500h7" /><path d="M7 10h9v4H7z" fill="#dfe2e6" /></S> },
  { w: "w-[24px]", name: "正交", on: true, gap: true, d: <S><path d="M3.500 0v15.500M3 9.500h5.500v6" stroke="#fff" /></S> },
  { w: "w-[23px]", name: "极轴", d: <S><path d="M13 5.500A6 6 0 1 0 13 11M7 8.500h9M7 8.500 13 2" /></S> },
  { w: "w-[17px]", caret: true, name: "极轴选项" },
  { w: "w-[23px]", name: "等轴测", d: <S><path d="M8.500 1v14" stroke="#57b58c" /><path d="M1 1l12 14" stroke="#d0604c" /><circle cx="8" cy="8.500" r="1.500" fill="#fff" /></S> },
  { w: "w-[17px]", caret: true, name: "等轴测选项" },
  { w: "w-[25px]", name: "对象追踪", gap: true, d: <S><path d="M13 2 2 13.500h14M6 9h3" /></S> },
  { w: "w-[23px]", name: "对象捕捉", d: <S><path d="M7 3.500h8.500V15M3.500 7v9" /><path d="M1.500 1.500h4v4h-4z" stroke="#e8a560" /></S> },
  { w: "w-[18px]", caret: true, name: "捕捉列表" },
  { w: "w-[24px]", name: "线宽", gap: true, d: <S><path d="M0 2.500h7M9 2.500h7M0 6.500h16M0 10.500h16M0 14.500h16" strokeWidth="2" /></S> },
  { w: "w-[26px]", name: "透明度", gap: true, d: <S><path d="M7 6h9v10H7z" fill="#86c2a0" stroke="none" /><path d="M3.500 0v7M0 3.500h7" /></S> },
  { w: "w-[23px]", name: "选择循环", gap: true, d: <S>{cube}<path d="M0 11.500h4v4H0z" fill="#3b4453" stroke="#e8a560" /></S> },
  { w: "w-[19px]", caret: true, name: "循环选项" },
  { w: "w-[26px]", name: "动态UCS", gap: true, d: <S><path d="M3.500 2v12h10M1 4l2.500-3L6 4M12 12l3 2-3 2" /><path d="M11 1 8 6h3l-1 4 4-6h-3z" fill="#dfe2e6" stroke="none" /></S> },
  { w: "w-[22px]", name: "过滤", d: <S><g strokeDasharray="2 1">{cube}</g><path d="M0 4h3v3H0zM9 4h3v3H9zM0 13h3v3H0zM9 13h3v3H9z" fill="#6cb8f0" stroke="none" /></S> },
  { w: "w-[18px]", caret: true, name: "过滤选项" },
  { w: "w-[23px]", name: "小控件", on: true, d: <S><path d="M8 8.500V3M8 8.500 2.500 13M8 8.500l5.500 4.500M8 2 13.500 5v6L8 14.500 2.500 11V5z" stroke="#fff" /><circle cx="8" cy="2" r="1.500" fill="#fff" /><circle cx="2" cy="13" r="1.500" fill="#fff" /><circle cx="14" cy="13" r="1.500" fill="#fff" /></S> },
  { w: "w-[20px]", caret: true, name: "小控件选项" },
  { w: "w-[23px]", name: "注释可见性", on: true, gap: true, d: <S>{person("#fff")}<circle cx="13" cy="4" r="2.500" stroke="#fff" /></S> },
  { w: "w-[24px]", name: "自动缩放", d: <S>{person("#dfe2e6")}<path d="M13 0l-3 4h2l-1 4 4-5h-2z" fill="#dfe2e6" stroke="none" /></S> },
  { w: "w-[26px]", name: "注释比例", d: <S>{person("#dfe2e6")}</S> },
  { w: "w-[56px]", t: "1:1 / 100%" },
  { w: "w-[19px]", caret: true, name: "比例选项" },
  { w: "w-[23px]", name: "工作空间", gap: true, d: <GearShape className="size-[15px] text-[#dfe2e6]" /> },
  { w: "w-[18px]", caret: true, name: "工作空间选项" },
  { w: "w-[25px]", name: "注释监视器", gap: true, d: <S><path d="M8 0v16M0 8h16" strokeWidth="2" /></S> },
  { w: "w-[28px]", name: "单位", gap: true, d: <S><path d="M5 0h8v2h-4v2h4v2h-4v2h4v2h-4v2h4v4H5z" fill="#dfe2e6" stroke="none" /></S> },
  { w: "w-[31px]", t: "小数" },
  { w: "w-[41px]", caret: true, name: "单位选项" },
  { w: "w-[28px]", name: "快捷特性", gap: true, d: <S><path d="M2.500.5h11v15h-11z" /><path d="M4 4.500h2M4 8.500h2M4 12.500h2M7.500 4.500h5M7.500 8.500h5M7.500 12.500h5" strokeWidth="1.500" /></S> },
  { w: "w-[22px]", name: "锁定界面", gap: true, d: <S><path d="M8 13.500H1.500v-12h13V7" /><path d="M1 3h14" strokeWidth="2" /><path d="M8 10h6v6H8z" fill="#dfe2e6" stroke="none" /><path d="M12 10V7.500q2-2 3.500 0V10" /></S> },
  { w: "w-[18px]", caret: true, name: "锁定选项" },
  { w: "w-[26px]", name: "隔离对象", gap: true, d: <S><path d="M1.500 1.500h5v5h-5zM5 15l3-5 3 5" /><circle cx="12.500" cy="7" r="2.700" /></S> },
  { w: "w-[26px]", name: "硬件加速", on: true, gap: true, d: <S><circle cx="8" cy="8.500" r="7" /><path d="M5 12l7-8-4 9" /></S> },
  { w: "w-[24px]", name: "可信", gap: true, d: <S><path d="M1 1h11v9H1z" fill="#2d62bd" stroke="none" /><path d="M0 9h8v7H0z" fill="#e8b055" stroke="none" /><path d="M5 1v9M1 5h11" stroke="#fff" /><path d="M7 11l3 4 6-7" stroke="#4f9b58" strokeWidth="2" /></S> },
  { w: "w-[30px]", name: "协调", d: <S><path d="M2 1h4v8H2zM4 1v6M8 3q5 0 6 5M3 12v2h6" /><path d="M12 7l5 9H8z" fill="#efb06a" stroke="none" /></S> },
  { w: "w-[24px]", name: "全屏", gap: true, d: <S><path d="M.5 2.500h15v11H.5zM3 11l3-3M13 5l-3 3M3 8v3h3M13 8V5h-3" /></S> },
  { w: "w-[24px]", name: "自定义", d: <S><path d="M0 3h16M0 8.500h16M0 14h16" strokeWidth="2" /></S> },
];

function BottomBar() {
  return (
    <footer className="flex h-5 shrink-0 items-start overflow-hidden bg-[#222933] text-[#b5b9bf]">
      <div className="flex h-[17px] items-center gap-[2px] pl-2">
        <button className="h-[17px] w-[53px] rounded-b-xl bg-[#3b4453] leading-[17px] font-bold text-white">模型</button>
        <button className="h-[17px] w-[46px] rounded-b-xl bg-[#2f3642] leading-[17px]">布局1</button>
        <button className="ml-1 h-[17px] w-12 rounded-b-xl bg-[#2f3642] leading-[17px]">布局2</button>
        <button aria-label="新建布局" className="ml-1.5 flex h-[17px] w-5 items-center justify-center rounded-b-lg bg-[#2f3642]">
          <svg viewBox="0 0 8 8" className="size-2" stroke="#bbb" strokeWidth="1.500"><path d="M4 0v8M0 4h8" /></svg>
        </button>
      </div>
      <div className="mt-px ml-auto flex h-6 shrink-0 pr-0.5 text-[#eef0f2]">
        <span className="bg-[#3b4453] pt-1 pr-1.5 pl-8 leading-4 whitespace-nowrap">-5.42806E+03, 2.804273E+04, 0.00000000</span>
        {cells.map((c, i) => (
          <button
            key={i}
            aria-label={c.name ?? c.t}
            className={`flex h-6 shrink-0 items-center justify-center whitespace-nowrap ${c.w} ${c.gap ? "border-l border-[#222933]" : ""} ${c.on ? "bg-[#5b8dc4]" : "bg-[#3b4453]"} ${c.caret && c.w === "w-[41px]" ? "pl-6" : ""}`}
          >
            {c.d}
            {c.t}
            {c.caret && <Caret />}
          </button>
        ))}
      </div>
    </footer>
  );
}

export default function App() {
  return (
    <div className="flex h-screen flex-col overflow-hidden bg-[#222933] font-['Noto_Sans','Noto_Sans_CJK_SC',sans-serif] text-[12px] leading-4">
      <header className="flex shrink-0">
        <div className="min-w-0 flex-1 overflow-hidden">
          <MenuTabs />
          <Ribbon />
        </div>
        <DisplayTools />
      </header>
      <FileTabs />
      <Toolbar />
      <div className="relative flex min-h-0 flex-1">
        <SidePanel />
        <div className="flex min-w-0 flex-1 flex-col">
          <Canvas />
          <CommandLine />
        </div>
        <svg viewBox="0 0 18 16" className="absolute top-[21px] left-[358px] h-4 w-[18px]" fill="#fff" stroke="#000" strokeWidth=".8">
          <path d="M6.500 1h2v14h-2zM10 1h2v14h-2zM.5 8 5 4v3h1.500v2H5v3zM17.500 8 13 4v3h-1.500v2H13v3z" />
        </svg>
      </div>
      <BottomBar />
    </div>
  );
}
